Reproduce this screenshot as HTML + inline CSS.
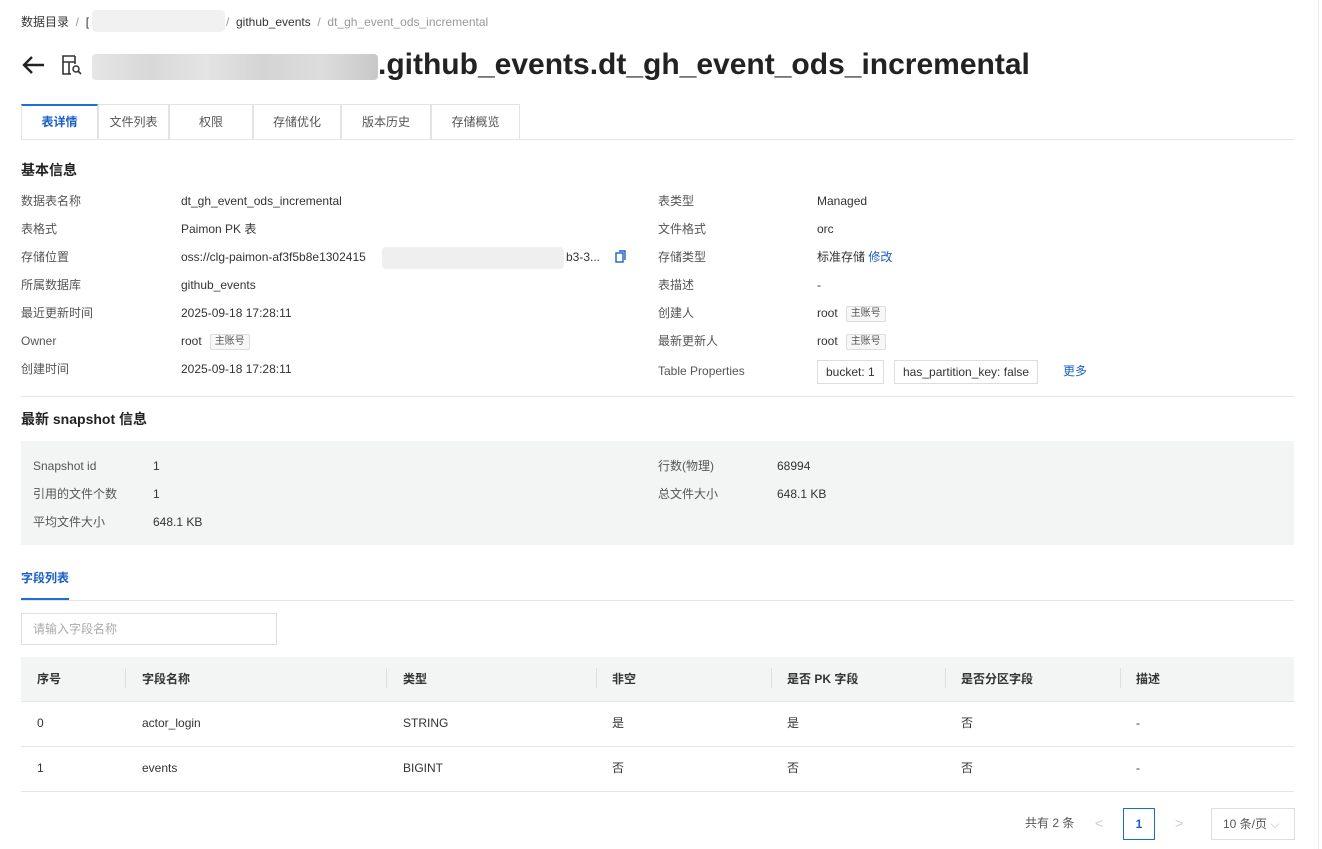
<!DOCTYPE html><html><head><meta charset="utf-8"><style>
*{box-sizing:border-box;margin:0;padding:0}
body{width:1322px;height:849px;background:#fff;font-family:"Liberation Sans","Noto Sans CJK SC",sans-serif;font-size:12px;color:#333;position:relative;overflow:hidden}
.a{position:absolute;white-space:nowrap;line-height:14px}
.lbl{color:#555}
.tag{display:inline-block;border:1px solid #ddd;background:#f7f7f7;font-size:10px;padding:0 4px;line-height:14px;margin-left:8px;border-radius:2px;color:#555;vertical-align:middle}
.blur{position:absolute;background:linear-gradient(90deg,#e6e6e6,#d8d8d8 20%,#e4e4e4 40%,#d4d4d4 60%,#ddd 80%,#c8c8c8);border-radius:4px}
.tab{position:absolute;top:104px;height:36px;border:1px solid #e3e3e3;border-bottom:none;text-align:center;line-height:34px;font-size:12px;color:#555}
.h{position:absolute;left:21px;font-size:14px;font-weight:bold;color:#222;line-height:16px}
.line{position:absolute;left:21px;width:1273px;height:1px;background:#e5e5e5}
.th{position:absolute;top:672px;font-weight:bold;color:#333;line-height:14px}
.sep{position:absolute;top:668px;width:1px;height:20px;background:#e0e0e0}
</style></head><body>
<div class="a" style="left:21px;top:15px">数据目录 <span style="color:#999">&nbsp;/&nbsp;</span> [</div>
<div class="blur" style="left:92px;top:10px;width:133px;height:22px;background:#f1f1f1"></div>
<div class="a" style="left:226px;top:15px"><span style="color:#999">/&nbsp;</span> github_events <span style="color:#999">&nbsp;/&nbsp; dt_gh_event_ods_incremental</span></div>
<svg class="a" style="left:21px;top:54px" width="26" height="22" viewBox="0 0 26 22"><path d="M23 11H3M11 3L3 11l8 8" stroke="#222" stroke-width="2.4" fill="none"/></svg>
<svg class="a" style="left:61px;top:54px" width="22" height="22" viewBox="0 0 22 22"><path d="M14 2H2v18h8M2 8h12M8 8v12M14 2v8" stroke="#333" stroke-width="1.6" fill="none"/><circle cx="15" cy="15" r="3" stroke="#333" stroke-width="1.5" fill="none"/><path d="M17 17l3 3" stroke="#333" stroke-width="1.6"/></svg>
<div class="blur" style="left:92px;top:54px;width:286px;height:26px"></div>
<div class="a" style="left:378px;top:48px;font-size:30px;line-height:34px;font-weight:bold;color:#222">.github_events.dt_gh_event_ods_incremental</div>
<div class="tab" style="left:21px;width:77px;color:#1a5fc7;font-weight:bold;border-top:2px solid #1a6fd1;line-height:32px">表详情</div>
<div class="tab" style="left:98px;width:71px">文件列表</div>
<div class="tab" style="left:169px;width:84px">权限</div>
<div class="tab" style="left:253px;width:88px">存储优化</div>
<div class="tab" style="left:341px;width:90px">版本历史</div>
<div class="tab" style="left:431px;width:89px">存储概览</div>
<div class="line" style="top:139px"></div>
<div class="h" style="top:162px">基本信息</div>

<div class="a lbl" style="left:21px;top:194px">数据表名称</div><div class="a" style="left:181px;top:194px">dt_gh_event_ods_incremental</div>
<div class="a lbl" style="left:21px;top:222px">表格式</div><div class="a" style="left:181px;top:222px">Paimon PK 表</div>
<div class="a lbl" style="left:21px;top:250px">存储位置</div><div class="a" style="left:181px;top:250px">oss://clg-paimon-af3f5b8e1302415</div>
<div class="blur" style="left:382px;top:247px;width:182px;height:22px;background:#efefef"></div>
<div class="a" style="left:566px;top:250px">b3-3...</div>
<div class="a lbl" style="left:21px;top:278px">所属数据库</div><div class="a" style="left:181px;top:278px">github_events</div>
<div class="a lbl" style="left:21px;top:306px">最近更新时间</div><div class="a" style="left:181px;top:306px">2025-09-18 17:28:11</div>
<div class="a lbl" style="left:21px;top:334px">Owner</div><div class="a" style="left:181px;top:334px">root<span class="tag">主账号</span></div>
<div class="a lbl" style="left:21px;top:362px">创建时间</div><div class="a" style="left:181px;top:362px">2025-09-18 17:28:11</div>
<svg class="a" style="left:614px;top:250px" width="13" height="14" viewBox="0 0 13 14"><rect x="2" y="3" width="7" height="9" stroke="#1a5fc7" stroke-width="1.4" fill="none"/><path d="M5 1h6v9" stroke="#1a5fc7" stroke-width="1.4" fill="none"/></svg>

<div class="a lbl" style="left:658px;top:194px">表类型</div><div class="a" style="left:817px;top:194px">Managed</div>
<div class="a lbl" style="left:658px;top:222px">文件格式</div><div class="a" style="left:817px;top:222px">orc</div>
<div class="a lbl" style="left:658px;top:250px">存储类型</div><div class="a" style="left:817px;top:250px">标准存储 <span style="color:#1a5fc7">修改</span></div>
<div class="a lbl" style="left:658px;top:278px">表描述</div><div class="a" style="left:817px;top:278px">-</div>
<div class="a lbl" style="left:658px;top:306px">创建人</div><div class="a" style="left:817px;top:306px">root<span class="tag">主账号</span></div>
<div class="a lbl" style="left:658px;top:334px">最新更新人</div><div class="a" style="left:817px;top:334px">root<span class="tag">主账号</span></div>
<div class="a lbl" style="left:658px;top:364px">Table Properties</div>
<div class="a" style="left:817px;top:360px;border:1px solid #ddd;padding:0 8px;line-height:22px">bucket: 1</div>
<div class="a" style="left:894px;top:360px;border:1px solid #ddd;padding:0 8px;line-height:22px">has_partition_key: false</div>
<div class="a" style="left:1063px;top:364px;color:#1a5fc7">更多</div>
<div class="line" style="top:396px"></div>
<div class="h" style="top:411px">最新 snapshot 信息</div>
<div class="a" style="left:21px;top:441px;width:1273px;height:104px;background:#f3f4f4"></div>
<div class="a lbl" style="left:33px;top:459px">Snapshot id</div><div class="a" style="left:153px;top:459px">1</div>
<div class="a lbl" style="left:33px;top:487px">引用的文件个数</div><div class="a" style="left:153px;top:487px">1</div>
<div class="a lbl" style="left:33px;top:515px">平均文件大小</div><div class="a" style="left:153px;top:515px">648.1 KB</div>
<div class="a lbl" style="left:658px;top:459px">行数(物理)</div><div class="a" style="left:777px;top:459px">68994</div>
<div class="a lbl" style="left:658px;top:487px">总文件大小</div><div class="a" style="left:777px;top:487px">648.1 KB</div>
<div class="a" style="left:21px;top:571px;color:#1a5fc7;font-weight:bold">字段列表</div>
<div class="a" style="left:21px;top:598px;width:48px;height:2px;background:#1a6fd1"></div>
<div class="line" style="top:600px"></div>
<div class="a" style="left:21px;top:613px;width:256px;height:32px;border:1px solid #ddd;padding-left:11px;line-height:30px;color:#aaa">请输入字段名称</div>
<div class="a" style="left:21px;top:657px;width:1273px;height:45px;background:#f3f4f4;border-bottom:1px solid #e5e5e5"></div>
<div class="th" style="left:37px">序号</div><div class="sep" style="left:125px"></div>
<div class="th" style="left:142px">字段名称</div><div class="sep" style="left:386px"></div>
<div class="th" style="left:403px">类型</div><div class="sep" style="left:596px"></div>
<div class="th" style="left:612px">非空</div><div class="sep" style="left:771px"></div>
<div class="th" style="left:787px">是否 PK 字段</div><div class="sep" style="left:945px"></div>
<div class="th" style="left:961px">是否分区字段</div><div class="sep" style="left:1120px"></div>
<div class="th" style="left:1136px">描述</div>
<div class="a" style="left:37px;top:716px">0</div><div class="a" style="left:142px;top:716px">actor_login</div><div class="a" style="left:403px;top:716px">STRING</div><div class="a" style="left:612px;top:716px">是</div><div class="a" style="left:787px;top:716px">是</div><div class="a" style="left:961px;top:716px">否</div><div class="a" style="left:1136px;top:716px">-</div>
<div class="line" style="top:746px"></div>
<div class="a" style="left:37px;top:761px">1</div><div class="a" style="left:142px;top:761px">events</div><div class="a" style="left:403px;top:761px">BIGINT</div><div class="a" style="left:612px;top:761px">否</div><div class="a" style="left:787px;top:761px">否</div><div class="a" style="left:961px;top:761px">否</div><div class="a" style="left:1136px;top:761px">-</div>
<div class="line" style="top:791px"></div>
<div class="a" style="left:1025px;top:816px;color:#555">共有 2 条</div>
<div class="a" style="left:1095px;top:816px;color:#ccc;font-size:14px">&lt;</div>
<div class="a" style="left:1123px;top:808px;width:32px;height:32px;border:1px solid #1a6fd1;color:#1a5fc7;font-weight:bold;text-align:center;line-height:30px">1</div>
<div class="a" style="left:1175px;top:816px;color:#ccc;font-size:14px">&gt;</div>
<div class="a" style="left:1211px;top:808px;width:84px;height:32px;border:1px solid #ddd;padding-left:11px;line-height:30px;color:#555">10 条/页 <span style="color:#bbb">⌵</span></div>
<div class="a" style="left:1318px;top:0;width:1px;height:849px;background:#eee"></div>
</body></html>
